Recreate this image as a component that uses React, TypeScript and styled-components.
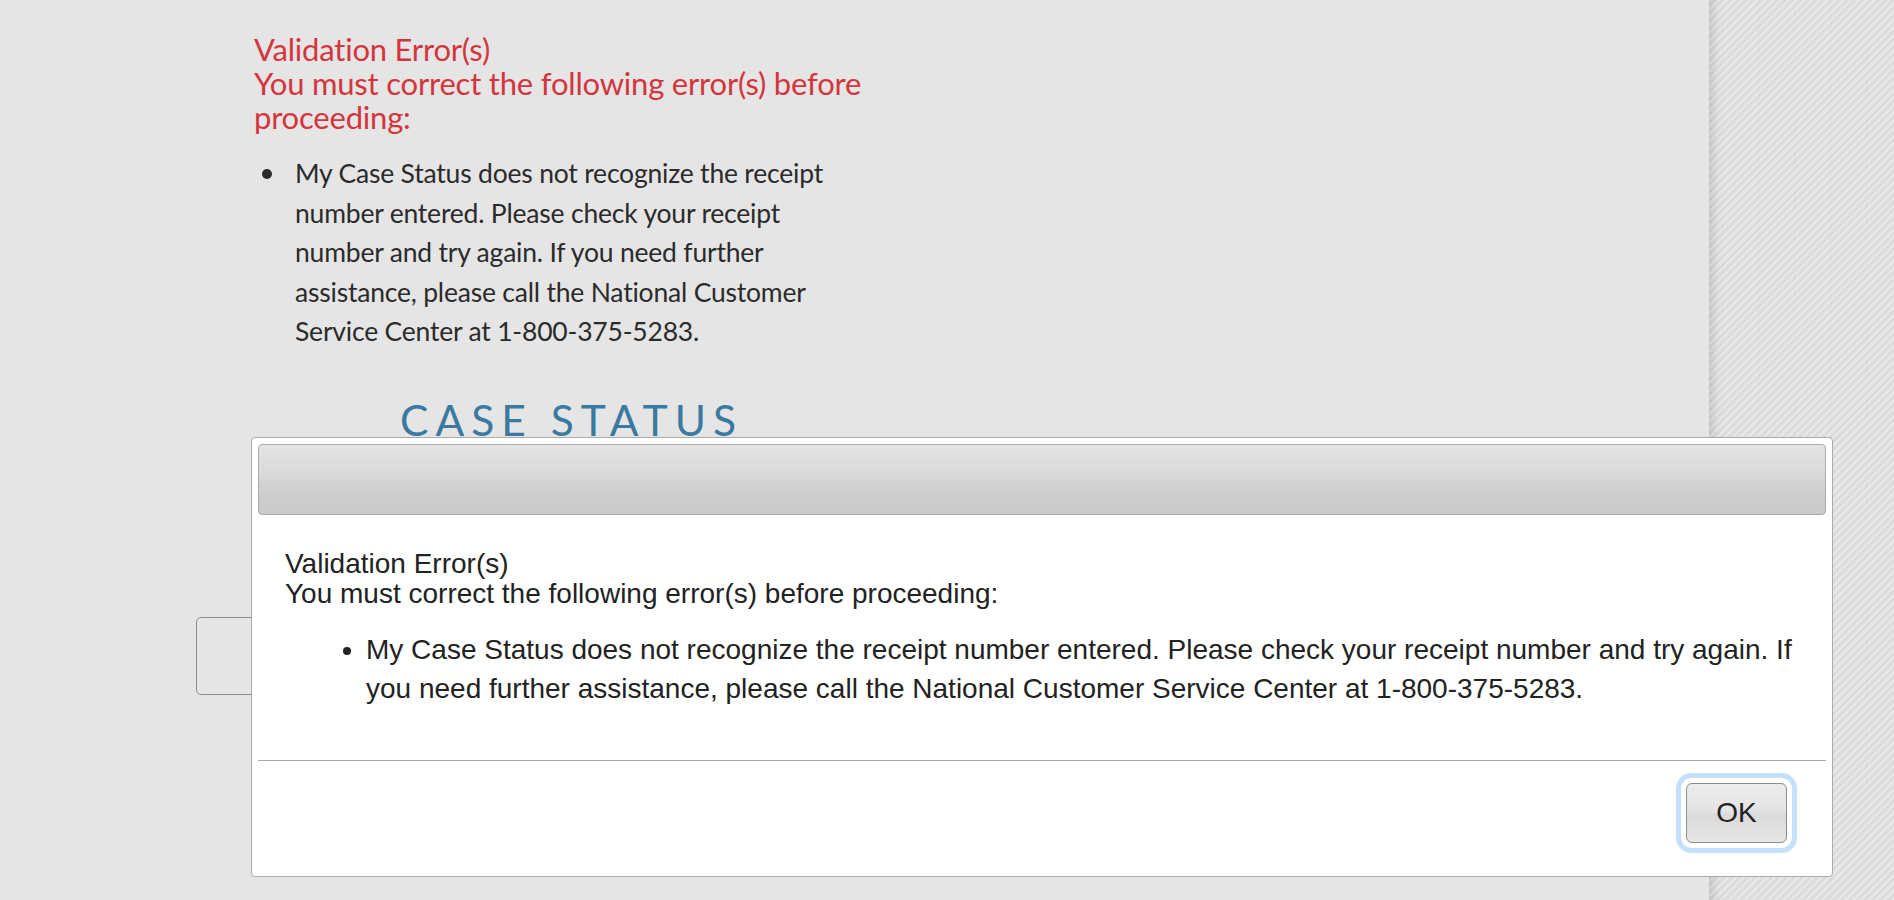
import React from 'react';
import styled, { createGlobalStyle } from 'styled-components';

const GlobalStyle = createGlobalStyle`
  html, body { margin: 0; padding: 0; }
  body { background: #e4e4e4; overflow: hidden; }
`;

const Page = styled.div`
  position: relative;
  display: flex;
  width: 1894px;
  height: 900px;
  overflow: hidden;
`;

const MainPanel = styled.main`
  width: 1709px;
  flex: none;
  box-sizing: border-box;
  background: #e5e5e5;
  display: flex;
  flex-direction: column;
  align-items: flex-start;
  padding: 32px 0 0 196px;
  font-family: "Source Sans Pro", Lato, sans-serif;
  font-variant-ligatures: none;
`;

const Texture = styled.aside`
  flex: 1;
  background-color: #e3e3e3;
  background-image:
    repeating-linear-gradient(90deg, transparent 0 13px, rgba(0,0,0,0.025) 13px 14px, transparent 14px 36px),
    repeating-linear-gradient(-45deg, #e8e8e8 0 2.5px, #dcdcdc 2.5px 5.5px);
  box-shadow: inset 12px 0 10px -8px rgba(0, 0, 0, 0.14);
`;

const ErrorSummary = styled.section`
  margin-left: 58px;
  width: 615px;
`;

const RedHeading = styled.p`
  margin: 0;
  color: #d4353c;
  font-size: 31px;
  letter-spacing: -0.2px;
  line-height: 34px;
`;

const ErrorList = styled.ul`
  margin: 20px 0 0;
  padding-left: 41px;
  list-style: none;
  font-size: 26.5px;
  letter-spacing: -0.2px;
  line-height: 39.5px;
  color: #2b2b2b;
`;

const ErrorItem = styled.li`
  position: relative;

  &::before {
    content: '';
    position: absolute;
    left: -33px;
    top: 15px;
    width: 10px;
    height: 10px;
    border-radius: 50%;
    background: #2b2b2b;
  }
`;

const SectionTitle = styled.h1`
  margin: 41px 0 0 204px;
  font-size: 42.5px;
  line-height: 53px;
  font-weight: 400;
  letter-spacing: 7px;
  color: #3a79a0;
`;

const ReceiptInput = styled.div`
  margin-top: 171px;
  width: 700px;
  height: 78px;
  box-sizing: border-box;
  border: 1px solid #8c8c8c;
  border-radius: 5px;
`;

const Dialog = styled.div`
  position: absolute;
  left: 251px;
  top: 437px;
  width: 1582px;
  height: 440px;
  box-sizing: border-box;
  padding: 6px;
  display: flex;
  flex-direction: column;
  background: #fff;
  border: 1px solid #aaa;
  border-radius: 4px;
  font-family: "Liberation Sans", Arial, sans-serif;
  color: #222;
`;

const TitleBar = styled.div`
  height: 71px;
  flex: none;
  box-sizing: border-box;
  border: 1px solid #aaa;
  border-radius: 4px;
  background: linear-gradient(to bottom, #e4e4e4 0%, #dadada 40%, #cdcdcd 70%, #cacaca 100%);
`;

const DialogContent = styled.div`
  flex: 1;
  padding: 34px 27px 0;
  font-size: 28px;
`;

const DialogHeading = styled.p`
  margin: 0;
  line-height: 30px;
`;

const DialogList = styled.ul`
  margin: 21px 0 0;
  padding-left: 81px;
  line-height: 39px;
`;

const ButtonPane = styled.div`
  height: 110px;
  flex: none;
  box-sizing: border-box;
  border-top: 1px solid #aaa;
  display: flex;
  justify-content: flex-end;
  align-items: flex-start;
  padding: 22px 39px 0 0;
`;

const OkButton = styled.button`
  width: 101px;
  height: 60px;
  border: 1px solid #8d8d8d;
  border-radius: 6px;
  background: linear-gradient(to bottom, #ececec 0%, #e4e4e4 45%, #dadada 55%, #e6e6e6 100%);
  font-family: "Liberation Sans", Arial, sans-serif;
  font-size: 28px;
  color: #222;
  box-shadow: 0 0 0 5px #fff, 0 0 0 10px #c4e0fb;
  padding: 0;
`;

const MESSAGE =
  'My Case Status does not recognize the receipt number entered. Please check your receipt number and try again. If you need further assistance, please call the National Customer Service Center at 1-800-375-5283.';

export default function App() {
  return (
    <>
      <GlobalStyle />
      <Page>
        <MainPanel>
          <ErrorSummary>
            <RedHeading>
              Validation Error(s)
              <br />
              You must correct the following error(s) before proceeding:
            </RedHeading>
            <ErrorList>
              <ErrorItem>{MESSAGE}</ErrorItem>
            </ErrorList>
          </ErrorSummary>
          <SectionTitle>CASE STATUS</SectionTitle>
          <ReceiptInput />
        </MainPanel>
        <Texture />
        <Dialog role="dialog">
          <TitleBar />
          <DialogContent>
            <DialogHeading>
              Validation Error(s)
              <br />
              You must correct the following error(s) before proceeding:
            </DialogHeading>
            <DialogList>
              <li>{MESSAGE}</li>
            </DialogList>
          </DialogContent>
          <ButtonPane>
            <OkButton type="button">OK</OkButton>
          </ButtonPane>
        </Dialog>
      </Page>
    </>
  );
}
